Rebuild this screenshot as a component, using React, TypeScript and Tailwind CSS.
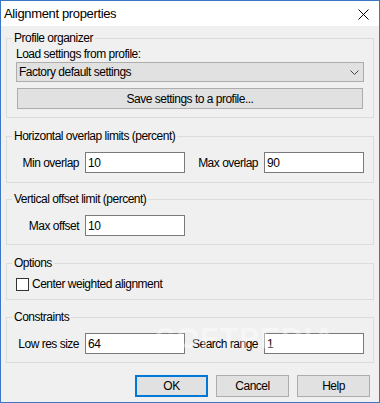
import { ReactNode } from 'react';

function Group({ title, children, className = '' }: { title: string; children: ReactNode; className?: string }) {
  return (
    <fieldset className={`border border-[#dcdcdc] px-[9px] ${className}`}>
      <legend className="ml-[-4px] px-[2px] text-[12px] leading-[16px] text-black">{title}</legend>
      {children}
    </fieldset>
  );
}

function Field({ label, value }: { label: string; value: string }) {
  return (
    <div className="flex items-center justify-end gap-[6px]">
      <span className="whitespace-nowrap text-[12px] leading-[16px] text-black">{label}</span>
      <input
        type="text"
        defaultValue={value}
        className="h-[21px] w-[100px] border border-[#7a7a7a] bg-white px-[2px] text-[12px] text-black outline-none"
      />
    </div>
  );
}

function DlgButton({ children, primary = false }: { children: ReactNode; primary?: boolean }) {
  return (
    <button
      type="button"
      className={`h-[22px] w-[73px] bg-[#e1e1e1] text-[12px] text-black ${
        primary ? 'border-2 border-[#0078d7]' : 'border border-[#adadad]'
      }`}
    >
      {children}
    </button>
  );
}

export default function App() {
  return (
    <div className="relative flex h-[403px] w-[380px] flex-col border border-[#3b77c4] bg-[#f0f0f0] font-['Liberation_Sans','Arial',sans-serif] tracking-[-0.5px]">
      {/* title bar */}
      <div className="flex h-[25px] shrink-0 items-center justify-between bg-white pl-[3px] pr-[10px]">
        <span className="text-[13px] tracking-[-0.35px] text-black">Alignment properties</span>
        <svg width="11" height="11" viewBox="0 0 11 11" className="mt-[1px]">
          <path d="M0.5 0.5 L10.5 10.5 M10.5 0.5 L0.5 10.5" stroke="#000" strokeWidth="1" />
        </svg>
      </div>

      <div className="flex flex-col px-[5px]">
        <Group title="Profile organizer" className="mt-[4px] pb-[8px]">
          <div className="h-[16px] text-[12px] leading-[16px] text-black">Load settings from profile:</div>
          <div className="flex h-[20px] items-center justify-between border border-[#adadad] bg-[#e1e1e1] pl-[2px] pr-[4px] text-[12px] text-black">
            <span>Factory default settings</span>
            <svg width="9" height="5" viewBox="0 0 9 5">
              <path d="M0.5 0.5 L4.5 4.5 L8.5 0.5" fill="none" stroke="#444" strokeWidth="1" />
            </svg>
          </div>
          <button
            type="button"
            className="mx-[1px] mt-[6px] block h-[21px] w-[346px] border border-[#adadad] bg-[#e1e1e1] text-[12px] text-black"
          >
            Save settings to a profile...
          </button>
        </Group>

        <Group title="Horizontal overlap limits (percent)" className="mt-[10px] pb-[9px] pt-[8px]">
          <div className="grid grid-cols-2 gap-x-[10px]">
            <Field label="Min overlap" value="10" />
            <Field label="Max overlap" value="90" />
          </div>
        </Group>

        <Group title="Vertical offset limit (percent)" className="mt-[8px] pb-[8px] pt-[8px]">
          <div className="grid grid-cols-2 gap-x-[10px]">
            <Field label="Max offset" value="10" />
          </div>
        </Group>

        <Group title="Options" className="mt-[10px] pb-[7px] pt-[5px]">
          <label className="flex h-[16px] items-center gap-[3px] text-[12px] text-black">
            <span className="h-[13px] w-[13px] border border-[#333] bg-white" />
            Center weighted alignment
          </label>
        </Group>

        <Group title="Constraints" className="mt-[9px] pb-[8px] pt-[8px]">
          <div className="grid grid-cols-2 gap-x-[10px]">
            <Field label="Low res size" value="64" />
            <Field label="Search range" value="1" />
          </div>
        </Group>

        <div className="mr-[4px] mt-[12px] flex justify-end gap-[8px]">
          <DlgButton primary>OK</DlgButton>
          <DlgButton>Cancel</DlgButton>
          <DlgButton>Help</DlgButton>
        </div>
      </div>

      {/* watermark */}
      <div className="pointer-events-none absolute left-[154px] top-[322px] select-none text-[30px] font-bold leading-none tracking-[1px] text-white opacity-40">
        SOFTPEDIA
      </div>
    </div>
  );
}
